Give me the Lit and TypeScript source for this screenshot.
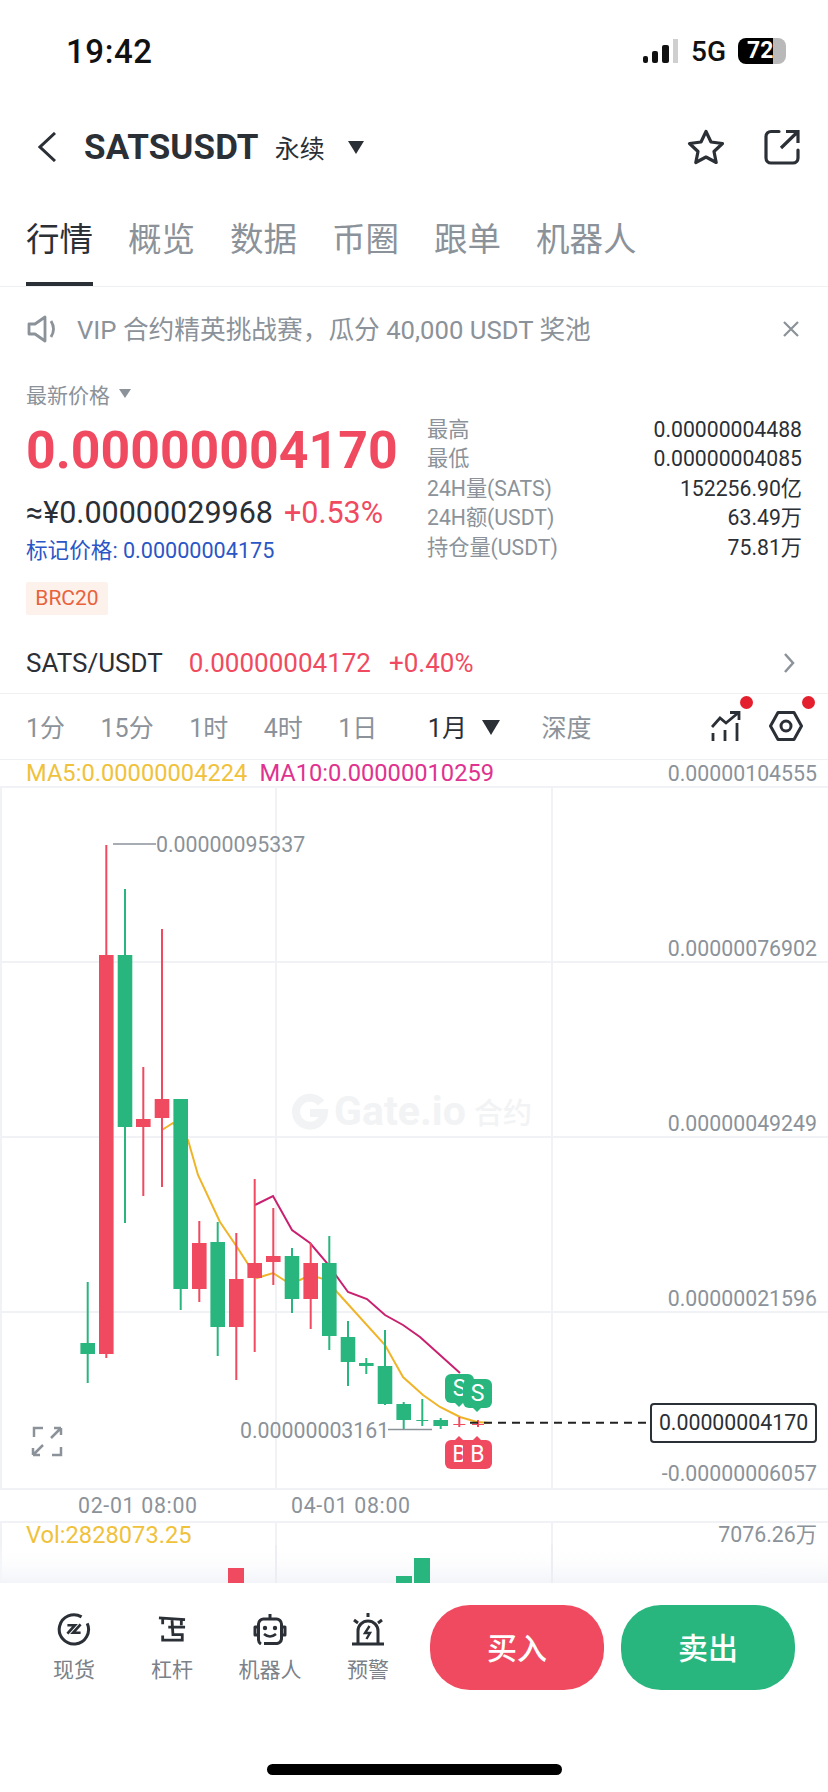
import { LitElement, html, svg, css } from 'lit';
import { customElement } from 'lit/decorators.js';

const RED = '#f04a60';
const GREEN = '#28b67e';

// center x, wick top, wick bottom, body top, body bottom, up?  (page coordinates)
type Candle = [number, number, number, number, number, boolean];
const candles: Candle[] = [
    [87.7, 1282, 1383, 1343, 1354, false],
    [106.3, 845, 1358, 955, 1354, true],
    [125, 889, 1223, 955, 1127, false],
    [143.3, 1067, 1196, 1119, 1127, true],
    [162, 929, 1187, 1099, 1118, true],
    [180.7, 1099, 1310, 1099, 1289, false],
    [199.3, 1221, 1302, 1243, 1289, true],
    [217.7, 1222, 1356, 1242, 1327, false],
    [236.3, 1233, 1380, 1279, 1327, true],
    [254.7, 1179, 1352, 1263, 1278, true],
    [273.3, 1208, 1285, 1256, 1262, true],
    [292, 1248, 1313, 1256, 1299, false],
    [310.7, 1243, 1329, 1263, 1299, true],
    [329.3, 1236, 1350, 1263, 1336, false],
    [348, 1321, 1386, 1337, 1362, false],
    [366.3, 1358, 1374, 1363, 1366, false],
    [385, 1330, 1405, 1366, 1404, false],
    [403.7, 1402, 1429, 1404, 1420, false],
    [422.3, 1399, 1426, 1420, 1421, false],
    [440.7, 1418, 1429, 1420, 1426, false],
    [459.3, 1417, 1427, 1424, 1425, true],
    [478, 1420, 1427, 1424, 1425, true],
];

const ma5 = '162,1130 173,1123 188,1140 198,1175 220,1222 237,1247 257,1278 273,1273 287,1282 300,1280 310,1275 327,1280 337,1292 385,1345 403,1377 423,1395 440,1407 460,1417 477,1422 490,1423';
const ma10 = '255,1205 273,1196 292,1230 310,1243 327,1263 348,1292 367,1299 385,1315 403,1325 420,1337 460,1373';

const axis: [string, number][] = [
    ['0.00000076902', 948],
    ['0.00000049249', 1123],
    ['0.00000021596', 1298],
    ['-0.00000006057', 1473],
];

const stats = [
    ['最高', '0.00000004488'],
    ['最低', '0.00000004085'],
    ['24H量(SATS)', '152256.90亿'],
    ['24H额(USDT)', '63.49万'],
    ['持仓量(USDT)', '75.81万'],
];

@customElement('app-root')
export class AppRoot extends LitElement {
    static styles = css`
        :host {
            --red: #f04a60;
            --green: #28b67e;
            --ink: #2b2f36;
            --muted: #8b9299;
            display: block;
            width: 828px;
            height: 1792px;
            overflow: hidden;
            background: #fff;
            font-family: Roboto, 'Noto Sans CJK SC', sans-serif;
            color: var(--ink);
        }

        svg { display: block; }

        /* Status bar */
        .status {
            height: 106px;
            display: flex;
            align-items: center;
            justify-content: space-between;
            padding: 0 42px 4px 66px;
            box-sizing: border-box;
        }
        .time { font-size: 33px; font-weight: 500; color: #111; letter-spacing: 0.6px; }
        .status-right { display: flex; align-items: center; gap: 12px; }
        .network { font-size: 28px; font-weight: 500; color: #111; }
        .battery {
            width: 48px;
            height: 26px;
            border-radius: 8px;
            background: linear-gradient(90deg, #000 0 35px, #b9b9b9 35px);
            color: #fff;
            font-size: 23px;
            font-weight: 700;
            line-height: 26px;
            padding-left: 9px;
            box-sizing: border-box;
        }

        /* Nav */
        .nav {
            height: 82px;
            display: flex;
            align-items: center;
            padding: 0 28px 0 38px;
        }
        .symbol { font-size: 35px; font-weight: 700; margin-left: 28px; letter-spacing: 0.1px; }
        .kind { font-size: 25px; margin-left: 16px; }
        .caret {
            width: 0;
            height: 0;
            border-left: 8.5px solid transparent;
            border-right: 8.5px solid transparent;
            border-top: 13px solid var(--ink);
            margin-left: 23px;
        }
        .nav-icons { margin-left: auto; display: flex; align-items: center; gap: 39px; }

        /* Tabs */
        .tabs {
            height: 99px;
            box-sizing: border-box;
            display: flex;
            gap: 35px;
            padding: 0 26px;
            border-bottom: 1px solid #eef0f2;
        }
        .tab {
            height: 98px;
            box-sizing: border-box;
            padding-top: 32px;
            line-height: 40px;
            font-size: 33.5px;
            color: var(--muted);
        }
        .tab.on { color: var(--ink); border-bottom: 4px solid var(--ink); }

        /* Notice */
        .notice {
            height: 84px;
            display: flex;
            align-items: center;
            padding: 0 29px 0 27px;
            color: var(--muted);
            font-size: 25.7px;
        }
        .notice span { margin: 0 0 3px 20px; }
        .notice svg:last-child { margin-left: auto; }

        /* Ticker */
        .ticker {
            height: 262px;
            display: grid;
            grid-template-columns: 401px 375px;
            padding-left: 26px;
        }
        .last-label {
            height: 45px;
            display: flex;
            align-items: center;
            font-size: 21px;
            color: var(--muted);
        }
        .last-label i {
            width: 0;
            height: 0;
            border-left: 6px solid transparent;
            border-right: 6px solid transparent;
            border-top: 9px solid var(--muted);
            margin-left: 9px;
        }
        .price {
            margin-top: 3px;
            height: 64px;
            line-height: 64px;
            font-size: 51.8px;
            font-weight: 700;
            color: var(--red);
        }
        .approx { height: 60px; line-height: 60px; font-size: 30.5px; white-space: nowrap; }
        .approx b { font-weight: 400; color: var(--red); margin-left: 11px; }
        .mark { height: 16px; line-height: 16px; font-size: 21.6px; color: #2a56c6; white-space: nowrap; }
        .chip {
            margin-top: 23px;
            width: 82px;
            height: 33px;
            line-height: 33px;
            text-align: center;
            background: #fdf1ec;
            border-radius: 2px;
            color: #e8623c;
            font-size: 21px;
        }
        .stats { padding-top: 44px; font-size: 21.2px; }
        .stat { height: 29.4px; line-height: 29.4px; display: flex; justify-content: space-between; }
        .stat span:first-child { color: var(--muted); }

        /* Spot row */
        .spot {
            height: 61px;
            box-sizing: border-box;
            display: flex;
            align-items: center;
            padding: 0 33px 0 26px;
            font-size: 26px;
            border-bottom: 1px solid #eef0f2;
        }
        .spot em { font-style: normal; color: var(--red); }
        .spot .spot-price { margin-left: 26px; }
        .spot .spot-pct { margin-left: 18px; }
        .spot svg { margin-left: auto; }

        /* Intervals */
        .intervals {
            height: 66px;
            box-sizing: border-box;
            display: flex;
            align-items: center;
            padding: 0 25px 2px 26px;
            gap: 35.5px;
            font-size: 25px;
            color: var(--muted);
            border-bottom: 1px solid #eef0f2;
        }
        .intervals .active { color: var(--ink); margin-left: 15px; display: flex; align-items: center; gap: 15px; }
        .intervals .active i {
            width: 0;
            height: 0;
            margin-top: 3px;
            border-left: 9px solid transparent;
            border-right: 9px solid transparent;
            border-top: 15px solid var(--ink);
        }
        .intervals .depth { margin-left: 6px; }
        .tool { position: relative; display: block; }
        .tool::after {
            content: '';
            position: absolute;
            top: -15px;
            right: -12px;
            width: 13px;
            height: 13px;
            border-radius: 50%;
            background: #e5202e;
        }
        .tools { margin-left: auto; display: flex; align-items: center; gap: 28px; }

        /* Chart */
        .legend {
            height: 26px;
            display: flex;
            align-items: center;
            padding: 0 11px 0 26px;
            gap: 12px;
            font-size: 23.7px;
        }
        .legend .ma5 { color: #f0c23c; }
        .legend .ma10 { color: #e0328f; }
        .legend .top { margin-left: auto; color: var(--muted); font-size: 21.3px; }
        .chart { position: relative; height: 797px; overflow: hidden; }
        .chart text { font-family: Roboto, 'Noto Sans CJK SC', sans-serif; font-size: 21.3px; fill: var(--muted); }
        .chart text.time-label { letter-spacing: 0.7px; }
        .chart text.vol { fill: #f0c23c; font-size: 23.7px; }
        .chart text.wm { font-size: 41px; font-weight: 700; fill: #f2f3f4; }
        .chart text.wm-cn { font-size: 29px; font-weight: 500; fill: #f2f3f4; }
        .last-box {
            position: absolute;
            left: 650px;
            top: 617px;
            width: 167px;
            height: 40px;
            box-sizing: border-box;
            border: 2px solid var(--ink);
            border-radius: 4px;
            background: #fff;
            text-align: center;
            line-height: 36px;
            font-size: 21.3px;
        }
        .flag {
            position: absolute;
            width: 29px;
            height: 29px;
            border-radius: 6px;
            color: #fff;
            text-align: center;
            line-height: 29px;
            font-size: 23px;
        }
        .flag::after {
            content: '';
            position: absolute;
            left: 10px;
            border-left: 4px solid transparent;
            border-right: 4px solid transparent;
        }
        .flag.sell { background: var(--green); }
        .flag.sell::after { bottom: -4px; border-top: 4px solid var(--green); }
        .flag.buy { background: var(--red); }
        .flag.buy::after { top: -4px; border-bottom: 4px solid var(--red); }

        /* Bottom bar */
        .dock {
            height: 181px;
            box-sizing: border-box;
            display: flex;
            align-items: flex-start;
            padding: 22px 0 0 25px;
            background: #fff;
        }
        .dock-items { display: flex; width: 392px; }
        .dock-item {
            width: 98px;
            display: flex;
            flex-direction: column;
            align-items: center;
            font-size: 21px;
            color: #7b8188;
        }
        .dock-icon { height: 36px; display: flex; align-items: center; margin-top: 6px; margin-bottom: 6px; }
        .btn {
            width: 174px;
            height: 85px;
            border-radius: 40px;
            color: #fff;
            font-size: 30px;
            text-align: center;
            line-height: 87px;
            font-weight: 500;
        }
        .btn.buy { background: var(--red); margin-left: 13px; }
        .btn.sell { background: var(--green); margin-left: 17px; }
        .home-wrap { height: 28px; }
        .home { width: 295px; height: 11px; margin-left: 267px; border-radius: 6px; background: #000; }
    `;

    renderChart() {
        const ink = (c: Candle) => (c[5] ? RED : GREEN);
        return html`<svg width="828" height="797" viewBox="0 786 828 797">
            <defs>
                <linearGradient id="fade" x1="0" x2="0" y1="0" y2="1">
                    <stop offset="0" stop-color="#fff" stop-opacity="0"></stop>
                    <stop offset="1" stop-color="#f3f4f9"></stop>
                </linearGradient>
            </defs>
            <!-- grid -->
            <g stroke="#f0f2f6" stroke-width="2" fill="none">
                <path d="M0 787H828M0 962H828M0 1137H828M0 1312H828M0 1489H828M0 1522H828"></path>
                <path d="M1 787V1489M276 787V1489M552 787V1489M1 1522V1583M276 1522V1583M552 1522V1583"></path>
            </g>
            <!-- watermark -->
            <g>
                <path d="M321 1103a14 14 0 1 0 3 10h-14" fill="none" stroke="#f2f3f4" stroke-width="8"></path>
                <text class="wm" x="334" y="1125">Gate.io</text>
                <text class="wm-cn" x="474" y="1124">合约</text>
            </g>
            <!-- moving averages sit behind the candles -->
            <polyline points=${ma5} fill="none" stroke="#f0b429" stroke-width="2"></polyline>
            <polyline points=${ma10} fill="none" stroke="#c9206f" stroke-width="2"></polyline>
            ${candles.map(c => svg`
                <rect x=${c[0] - 1} y=${c[1]} width="2" height=${c[2] - c[1]} fill=${ink(c)}></rect>
                <rect x=${c[0] - (c[4] - c[3] < 2 ? 6 : 7.3)} y=${c[3]} width=${c[4] - c[3] < 2 ? 12 : 14.6} height=${c[4] - c[3]} fill=${ink(c)}></rect>
            `)}
            <!-- hi / lo markers -->
            <path d="M113 844H156M388 1429.5H432" stroke="#8b9299" stroke-width="1.5"></path>
            <text x="156" y="851.5">0.00000095337</text>
            <text x="240" y="1437.5">0.00000003161</text>
            <!-- last price line -->
            <path d="M470 1422.7H650" stroke="#222" stroke-width="2" stroke-dasharray="8 6"></path>
            <!-- axis labels -->
            ${axis.map(([t, y]) => svg`<text x="817" y=${y} text-anchor="end" dy="7.5">${t}</text>`)}
            <text class="time-label" x="78" y="1512.5">02-01 08:00</text>
            <text class="time-label" x="291" y="1512.5">04-01 08:00</text>
            <text class="vol" x="26" y="1543">Vol:2828073.25</text>
            <text x="817" y="1541.5" text-anchor="end">7076.26万</text>
            <!-- volume -->
            <rect x="0" y="1545" width="828" height="38" fill="url(#fade)"></rect>
            <path d="M276 1545V1583M552 1545V1583" stroke="#eceef3" stroke-width="2"></path>
            <rect x="228" y="1568" width="16" height="15" fill=${RED}></rect>
            <rect x="396" y="1576" width="16" height="7" fill=${GREEN}></rect>
            <rect x="414" y="1558" width="16" height="25" fill=${GREEN}></rect>
            <!-- expand -->
            <path d="M34 1437V1428H43M61 1428L51 1438M61 1428H54M61 1428V1435M33 1455L43 1445M33 1455V1448M33 1455H40M52 1455H61V1447" fill="none" stroke="#8b9299" stroke-width="2.5"></path>
        </svg>`;
    }

    render() {
        return html`
            <div class="status">
                <div class="time">19:42</div>
                <div class="status-right">
                    <svg width="36" height="24" viewBox="0 0 36 24">
                        <rect x="0" y="17" width="5" height="7" rx="2" fill="#111"></rect>
                        <rect x="9" y="12" width="6" height="12" rx="2" fill="#111"></rect>
                        <rect x="19" y="6" width="7" height="18" rx="2" fill="#111"></rect>
                        <rect x="30" y="0" width="5" height="24" fill="#cfcfcf"></rect>
                    </svg>
                    <div class="network">5G</div>
                    <div class="battery">72</div>
                </div>
            </div>

            <div class="nav">
                <svg width="18" height="30" viewBox="0 0 18 30">
                    <path d="M17 1L2 15L17 29" fill="none" stroke="#2b2f36" stroke-width="3"></path>
                </svg>
                <div class="symbol">SATSUSDT</div>
                <div class="kind">永续</div>
                <div class="caret"></div>
                <div class="nav-icons">
                    <svg width="38" height="36" viewBox="0 0 38 36">
                        <path d="M19 2.5L24 13L35.5 14.5L27 22.5L29.2 33.5L19 28L8.8 33.5L11 22.5L2.5 14.5L14 13Z" fill="none" stroke="#2b2f36" stroke-width="3.2" stroke-linejoin="round"></path>
                    </svg>
                    <svg width="36" height="36" viewBox="0 0 36 36">
                        <path d="M15 2.5H7A5 5 0 0 0 2 7.500V29A5 5 0 0 0 7 34H29A5 5 0 0 0 34 29V21" fill="none" stroke="#2b2f36" stroke-width="3.2" stroke-linecap="round"></path>
                        <path d="M17 19L33.500 3M22 2.500H34V14" fill="none" stroke="#2b2f36" stroke-width="3.2"></path>
                    </svg>
                </div>
            </div>

            <div class="tabs">
                ${['行情', '概览', '数据', '币圈', '跟单', '机器人'].map((t, i) => html`<div class="tab ${i === 0 ? 'on' : ''}">${t}</div>`)}
            </div>

            <div class="notice">
                <svg width="30" height="28" viewBox="0 0 30 28">
                    <path d="M2 9H8L18 2V26L8 19H2Z" fill="none" stroke="#8b9299" stroke-width="2.8" stroke-linejoin="round"></path>
                    <path d="M24 6Q29 14 24 22" fill="none" stroke="#8b9299" stroke-width="2.8"></path>
                </svg>
                <span>VIP 合约精英挑战赛，瓜分 40,000 USDT 奖池</span>
                <svg width="16" height="16" viewBox="0 0 16 16">
                    <path d="M1 1L15 15M15 1L1 15" stroke="#8b9299" stroke-width="2.200"></path>
                </svg>
            </div>

            <div class="ticker">
                <div>
                    <div class="last-label">最新价格<i></i></div>
                    <div class="price">0.00000004170</div>
                    <div class="approx">≈¥0.00000029968<b>+0.53%</b></div>
                    <div class="mark">标记价格: 0.00000004175</div>
                    <div class="chip">BRC20</div>
                </div>
                <div class="stats">
                    ${stats.map(([k, v]) => html`<div class="stat"><span>${k}</span><span>${v}</span></div>`)}
                </div>
            </div>

            <div class="spot">
                <span>SATS/USDT</span>
                <em class="spot-price">0.00000004172</em>
                <em class="spot-pct">+0.40%</em>
                <svg width="12" height="22" viewBox="0 0 12 22">
                    <path d="M2 2L10 11L2 20" fill="none" stroke="#8b9299" stroke-width="2.500"></path>
                </svg>
            </div>

            <div class="intervals">
                <span>1分</span><span>15分</span><span>1时</span><span>4时</span><span>1日</span>
                <span class="active">1月<i></i></span>
                <span class="depth">深度</span>
                <div class="tools">
                    <span class="tool">
                        <svg width="30" height="30" viewBox="0 0 30 30">
                            <path d="M2 22V30M14 19V30M26 12V30" stroke="#2b2f36" stroke-width="2.800" fill="none"></path>
                            <path d="M1 16L9 7L15 12L27 2M19 1.500H28V9" stroke="#2b2f36" stroke-width="2.800" fill="none"></path>
                        </svg>
                    </span>
                    <span class="tool">
                        <svg width="34" height="30" viewBox="0 0 34 30">
                            <path d="M1.500 15L9 1.500H25L32.500 15L25 28.500H9Z" fill="none" stroke="#2b2f36" stroke-width="3" stroke-linejoin="round"></path>
                            <circle cx="17" cy="15" r="5" fill="none" stroke="#2b2f36" stroke-width="3"></circle>
                        </svg>
                    </span>
                </div>
            </div>

            <div class="legend">
                <span class="ma5">MA5:0.00000004224</span>
                <span class="ma10">MA10:0.00000010259</span>
                <span class="top">0.00000104555</span>
            </div>

            <div class="chart">
                ${this.renderChart()}
                <div class="last-box">0.00000004170</div>
                <div class="flag sell" style="left:445px;top:588px">S</div>
                <div class="flag sell" style="left:463px;top:593px">S</div>
                <div class="flag buy" style="left:445px;top:654px">B</div>
                <div class="flag buy" style="left:463px;top:654px">B</div>
            </div>

            <div class="dock">
                <div class="dock-items">
                    <div class="dock-item">
                        <div class="dock-icon">
                            <svg width="34" height="34" viewBox="0 0 36 36">
                                <path d="M26 5.200A15.500 15.500 0 1 0 32 12" fill="none" stroke="#2b2f36" stroke-width="3.200"></path>
                                <path d="M11 14H19L11 23M25 13L17 22H25" fill="none" stroke="#2b2f36" stroke-width="2.800"></path>
                            </svg>
                        </div>
                        现货
                    </div>
                    <div class="dock-item">
                        <div class="dock-icon">
                            <svg width="30" height="28" viewBox="0 0 32 30">
                                <path d="M2 3L30 5M6 4V10M26 5V11M12 13H30M16 5L17 21H27V27H6V22" fill="none" stroke="#2b2f36" stroke-width="3"></path>
                            </svg>
                        </div>
                        杠杆
                    </div>
                    <div class="dock-item">
                        <div class="dock-icon">
                            <svg width="34" height="32" viewBox="0 0 34 32">
                                <path d="M17 1V6M8 31A5 5 0 0 1 5.500 27V11A5 5 0 0 1 11 6H23A5 5 0 0 1 28.500 11V26A5 5 0 0 1 23 30.500H11M5 14H2V22H5M29 14H32V22H29" fill="none" stroke="#2b2f36" stroke-width="3" stroke-linejoin="round"></path>
                                <circle cx="12" cy="15" r="2.200" fill="#2b2f36"></circle>
                                <circle cx="22" cy="15" r="2.200" fill="#2b2f36"></circle>
                                <path d="M11 21Q17 26 23 21" fill="none" stroke="#2b2f36" stroke-width="2.600"></path>
                            </svg>
                        </div>
                        机器人
                    </div>
                    <div class="dock-item">
                        <div class="dock-icon">
                            <svg width="32" height="33" viewBox="0 0 32 33">
                                <path d="M0 31H32M6 30V18A10 10 0 0 1 26 18V30M16 0V4M2 7L6 10M30 7L26 10" fill="none" stroke="#2b2f36" stroke-width="3"></path>
                                <path d="M17.500 13L13 20H18L14.500 26" fill="none" stroke="#2b2f36" stroke-width="2.400"></path>
                            </svg>
                        </div>
                        预警
                    </div>
                </div>
                <div class="btn buy">买入</div>
                <div class="btn sell">卖出</div>
            </div>
            <div class="home-wrap"><div class="home"></div></div>
        `;
    }
}
